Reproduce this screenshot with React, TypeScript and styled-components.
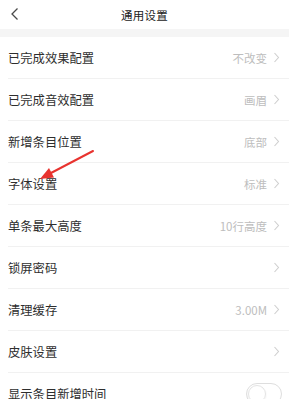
import React from "react";
import styled, {createGlobalStyle} from "styled-components";

const GlobalStyle = createGlobalStyle`
  html, body {
    margin: 0;
    padding: 0;
    background: #ffffff;
    font-family: "Noto Sans CJK SC", "Noto Sans", sans-serif;
  }
`;

interface Item {
  label: string;
  value?: string;
  kind?: "arrow" | "switch";
}

const items: Item[] = [
  {label: "已完成效果配置", value: "不改变"},
  {label: "已完成音效配置", value: "画眉"},
  {label: "新增条目位置", value: "底部"},
  {label: "字体设置", value: "标准"},
  {label: "单条最大高度", value: "10行高度"},
  {label: "锁屏密码"},
  {label: "清理缓存", value: "3.00M"},
  {label: "皮肤设置"},
  {label: "显示条目新增时间", kind: "switch"},
];

const Chevron: React.FC = () => (
  <svg width="7" height="11" viewBox="0 0 7 11">
    <path d="M1.5 1 L5.5 5.5 L1.5 10" fill="none" stroke="#cfcfcf" strokeWidth="1.1" />
  </svg>
);

export default function App() {
  return (
    <>
      <GlobalStyle />
      <Page>
        <Header>
          <Back>
            <svg width="10" height="14" viewBox="0 0 10 14">
              <path d="M7.5 1.5 L2 7 L7.5 12.5" fill="none" stroke="#4a4a4a" strokeWidth="1.3" />
            </svg>
          </Back>
          <Title>通用设置</Title>
        </Header>
        <Band />
        <List>
          {items.map((item) => (
            <Row key={item.label}>
              <Label>{item.label}</Label>
              {item.kind === "switch" ? (
                <Switch>
                  <Knob />
                </Switch>
              ) : (
                <Right>
                  {item.value ? <Value>{item.value}</Value> : null}
                  <Chevron />
                </Right>
              )}
            </Row>
          ))}
        </List>
        <Pointer width="70" height="45" viewBox="0 0 70 45">
          <path d="M63 6 L20 28.5" stroke="#e8332f" strokeWidth="2" strokeLinecap="round" />
          <path d="M10 34 L19 23 L24 32.5 Z" fill="#e8332f" />
        </Pointer>
      </Page>
    </>
  );
}

const Page = styled.div`
  position: relative;
  width: 289px;
  height: 399px;
  overflow: hidden;
  background: #ffffff;
`;

const Header = styled.div`
  position: relative;
  height: 29px;
  display: flex;
  align-items: center;
  justify-content: center;
`;

const Back = styled.div`
  position: absolute;
  left: 10px;
  top: 7px;
  display: flex;
`;

const Title = styled.div`
  font-size: 11.5px;
  color: #222;
  letter-spacing: 0.2px;
`;

const Band = styled.div`
  height: 8px;
  background: #f5f5f5;
`;

const List = styled.div`
  display: flex;
  flex-direction: column;
`;

const Row = styled.div`
  height: 42px;
  box-sizing: border-box;
  margin-left: 8px;
  padding-right: 9px;
  display: flex;
  align-items: center;
  justify-content: space-between;
  border-bottom: 1px solid #f1f1f1;
`;

const Label = styled.div`
  font-size: 12.3px;
  color: #2e2e2e;
`;

const Right = styled.div`
  display: flex;
  align-items: center;
  gap: 6px;
`;

const Value = styled.div`
  font-size: 11.5px;
  color: #bdbdbd;
`;

const Switch = styled.div`
  position: relative;
  width: 36px;
  height: 22px;
  box-sizing: border-box;
  border: 1px solid #dedede;
  border-radius: 11px;
  margin-right: -2px;
  background: #fff;
`;

const Knob = styled.div`
  position: absolute;
  left: 1px;
  top: 1px;
  width: 18px;
  height: 18px;
  border-radius: 50%;
  border: 1px solid #e4e4e4;
  box-sizing: border-box;
  box-shadow: 0 1px 2px rgba(0, 0, 0, 0.08);
`;

const Pointer = styled.svg`
  position: absolute;
  left: 30px;
  top: 145px;
`;
